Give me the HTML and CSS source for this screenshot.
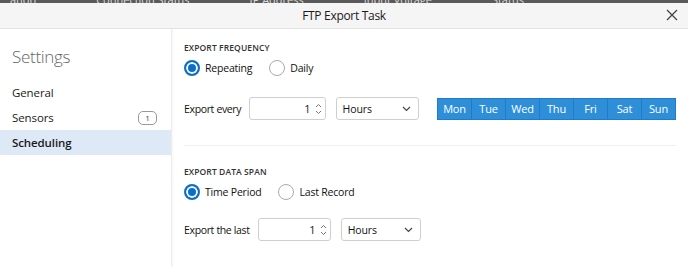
FILE: index.html
```html
<!DOCTYPE html>
<html>
<head>
<meta charset="utf-8">
<link rel="stylesheet" href="styles.css">
</head>
<body>
<div class="backdrop">
  <span>ation</span><span>Connection Status</span><span>IP Address</span><span>Input Voltage</span><span>Status</span>
</div>
<div class="dialog">
  <div class="titlebar">
    <span class="title">FTP Export Task</span>
    <svg class="close" width="12" height="12" viewBox="0 0 12 12"><path d="M1 1L11 11M11 1L1 11" stroke="#444" stroke-width="1.3" fill="none"/></svg>
  </div>
  <div class="body">
    <aside class="sidebar">
      <div class="side-title">Settings</div>
      <div class="nav-item">General</div>
      <div class="nav-item">Sensors <span class="badge">1</span></div>
      <div class="nav-item active">Scheduling</div>
    </aside>
    <main class="content">
      <section class="section">
        <div class="heading">EXPORT FREQUENCY</div>
        <div class="radios">
          <label class="radio checked"><span class="dot"></span>Repeating</label>
          <label class="radio"><span class="dot"></span>Daily</label>
        </div>
        <div class="row">
          <span class="label">Export every</span>
          <div class="spin w1"><span class="val">1</span><span class="arrows"><svg width="7" height="14" viewBox="0 0 7 14"><path d="M1 5L3.5 2.5L6 5M1 9L3.5 11.5L6 9" stroke="#777" stroke-width="1" fill="none"/></svg></span></div>
          <div class="select"><span>Hours</span><svg width="9" height="6" viewBox="0 0 9 6"><path d="M1 1L4.5 4.5L8 1" stroke="#444" stroke-width="1.2" fill="none"/></svg></div>
          <div class="days">
            <span>Mon</span><span>Tue</span><span>Wed</span><span>Thu</span><span>Fri</span><span>Sat</span><span>Sun</span>
          </div>
        </div>
      </section>
      <div class="divider"></div>
      <section class="section second">
        <div class="heading">EXPORT DATA SPAN</div>
        <div class="radios">
          <label class="radio checked"><span class="dot"></span>Time Period</label>
          <label class="radio"><span class="dot"></span>Last Record</label>
        </div>
        <div class="row">
          <span class="label">Export the last</span>
          <div class="spin w2"><span class="val">1</span><span class="arrows"><svg width="7" height="14" viewBox="0 0 7 14"><path d="M1 5L3.5 2.5L6 5M1 9L3.5 11.5L6 9" stroke="#777" stroke-width="1" fill="none"/></svg></span></div>
          <div class="select"><span>Hours</span><svg width="9" height="6" viewBox="0 0 9 6"><path d="M1 1L4.5 4.5L8 1" stroke="#444" stroke-width="1.2" fill="none"/></svg></div>
        </div>
      </section>
    </main>
  </div>
</div>
</body>
</html>
```
FILE: styles.css
```css
* { box-sizing: border-box; }
html, body { margin: 0; padding: 0; }
body {
  width: 688px; height: 267px; overflow: hidden;
  font-family: "Open Sans", "Noto Sans", sans-serif;
  color: #1a1a1a;
  background: #fff;
}
.backdrop {
  height: 3px; background: #5a5a5a; overflow: hidden;
  display: flex; gap: 60px; padding-left: 10px;
  font-size: 11px; line-height: 3px; color: #ddd; white-space: nowrap;
}
.backdrop span { display: block; line-height: 0; }
.dialog { display: flex; flex-direction: column; height: 264px; }
.titlebar {
  height: 26px; background: #f5f5f5; border-bottom: 1px solid #e3e3e3;
  position: relative; display: flex; align-items: center; justify-content: center;
}
.title { font-size: 12px; color: #1a1a1a; letter-spacing: -0.3px; }
.close { position: absolute; right: 10px; top: 6px; }
.body { flex: 1; display: flex; }
.sidebar {
  width: 172px; flex-shrink: 0; border-right: 1px solid #ececec; box-shadow: 1px 0 2px rgba(0,0,0,0.04);
  padding-top: 16px;
}
.side-title { font-size: 17px; font-weight: 300; color: #666; padding-left: 12px; height: 28px; line-height: 24px; margin-bottom: 7px; letter-spacing: -0.3px; }
.nav-item {
  height: 25px; line-height: 25px; padding-left: 12px; padding-right: 14px;
  font-size: 11.5px; color: #1a1a1a; display: flex; justify-content: space-between; align-items: center;
  letter-spacing: -0.1px; white-space: nowrap;
}
.nav-item.active { background: #dde9f6; font-weight: 600; }
.badge {
  width: 19px; height: 14px; border: 1px solid #999; border-radius: 5px;
  font-size: 8px; line-height: 12px; text-align: center; color: #444;
}
.content { flex: 1; min-width: 0; padding: 13px 12px 0 12px; }
.heading { font-size: 8.5px; font-weight: 600; color: #333; letter-spacing: 0.1px; height: 12px; line-height: 12px; }
.radios { display: flex; gap: 17px; margin-top: 3px; height: 22px; align-items: center; }
.radio { display: flex; align-items: center; gap: 5px; font-size: 10.5px; color: #111; letter-spacing: -0.2px; white-space: nowrap; }
.dot { width: 16px; height: 16px; border-radius: 50%; border: 1px solid #aaa; background: #fff; display: inline-block; }
.radio.checked .dot { border: 2px solid #0a6fc8; box-shadow: inset 0 0 0 2px #fff; background: #0a6fc8; }
.row { display: flex; align-items: center; margin-top: 18px; height: 23px; }
.second .row { margin-top: 15px; }
.label { font-size: 10.5px; color: #111; margin-right: 8px; letter-spacing: -0.35px; white-space: nowrap; }
.spin {
  height: 23px; border: 1px solid #cfcfcf; border-radius: 3px; background: #fff;
  display: flex; align-items: center; justify-content: flex-end; padding-right: 3px;
}
.spin.w1 { width: 77px; }
.spin.w2 { width: 73px; }
.val { font-size: 11px; margin-right: 4px; }
.arrows { display: flex; align-items: center; }
.select {
  margin-left: 10px; width: 84px; height: 23px; border: 1px solid #cfcfcf; border-radius: 3px;
  display: flex; align-items: center; justify-content: space-between; padding: 0 7px 0 6px;
  font-size: 10.5px; letter-spacing: -0.1px; color: #111;
}
.second .select { width: 80px; }
.days {
  margin-left: 18px; display: flex; height: 22px; background: #2e8fd8; border: 1px solid #1f7ccb;
}
.days span {
  width: 34px; height: 20px; line-height: 20px; text-align: center; color: #fff; font-size: 11px;
  border-right: 1px solid #1f7ccb; letter-spacing: -0.2px;
}
.days span:last-child { border-right: none; width: 33px; }
.divider { height: 1px; background: #efefef; margin-top: 25px; width: 492px; }
.second { padding-top: 20px; }
```
